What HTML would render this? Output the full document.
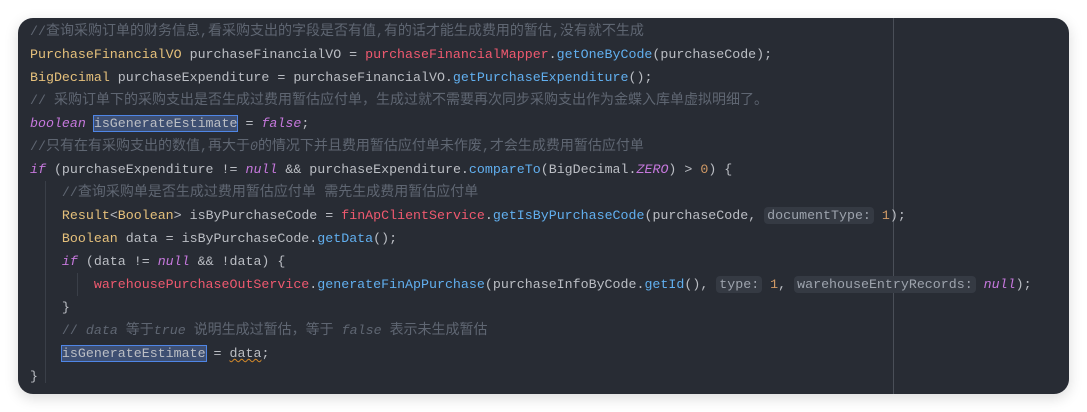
<!DOCTYPE html>
<html><head><meta charset="utf-8"><style>
html,body{margin:0;padding:0;background:#fff;width:1087px;height:412px;overflow:hidden}
.card{position:absolute;left:18px;top:18px;width:1051px;height:376px;background:#282c34;border-radius:15px;box-shadow:0 4px 14px rgba(0,0,0,.15);overflow:hidden}
pre{margin:0;position:absolute;left:12px;top:2px;font-family:"Liberation Mono","Noto Sans CJK SC",monospace;font-size:13.3px;line-height:23px;color:#bbbec4}
.c{color:#5f6672}.t{color:#e5c07b}.r{color:#ef596f}.f{color:#61afef}.k{color:#c678dd;font-style:italic}.n{color:#d19a66}
.z{font-size:14px;line-height:10px}
.sel{background:#3e4f72;outline:1px solid #4f86e6}
.h{background:#353a43;color:#9da3ad;border-radius:4px;padding:1px 3px}
.g{position:absolute;width:1px;background:#3a3f48}
.u{text-decoration:underline wavy #d48a2a;text-decoration-thickness:1px}
</style></head><body>
<div class="card">
<div class="g" style="left:875px;top:0;height:376px;background:#4a4f58"></div>
<div class="g" style="left:27px;top:163px;height:202px"></div>
<div class="g" style="left:59px;top:255px;height:23px"></div>
<pre><span class="c">//<span class="z">查询采购订单的财务信息</span>,<span class="z">看采购支出的字段是否有值</span>,<span class="z">有的话才能生成费用的暂估</span>,<span class="z">没有就不生成</span></span>
<span class="t">PurchaseFinancialVO</span> purchaseFinancialVO = <span class="r">purchaseFinancialMapper</span>.<span class="f">getOneByCode</span>(purchaseCode);
<span class="t">BigDecimal</span> purchaseExpenditure = purchaseFinancialVO.<span class="f">getPurchaseExpenditure</span>();
<span class="c">// <span class="z">采购订单下的采购支出是否生成过费用暂估应付单，生成过就不需要再次同步采购支出作为金蝶入库单虚拟明细了。</span></span>
<span class="k">boolean</span> <span class="sel">isGenerateEstimate</span> = <span class="k">false</span>;
<span class="c">//<span class="z">只有在有采购支出的数值</span>,<span class="z">再大于</span><i>0</i><span class="z">的情况下并且费用暂估应付单未作废</span>,<span class="z">才会生成费用暂估应付单</span></span>
<span class="k">if</span> (purchaseExpenditure != <span class="k">null</span> &amp;&amp; purchaseExpenditure.<span class="f">compareTo</span>(BigDecimal.<span class="k">ZERO</span>) &gt; <span class="n">0</span>) {
    <span class="c">//<span class="z">查询采购单是否生成过费用暂估应付单 需先生成费用暂估应付单</span></span>
    <span class="t">Result</span>&lt;<span class="t">Boolean</span>&gt; isByPurchaseCode = <span class="r">finApClientService</span>.<span class="f">getIsByPurchaseCode</span>(purchaseCode, <span class="h">documentType:</span> <span class="n">1</span>);
    <span class="t">Boolean</span> data = isByPurchaseCode.<span class="f">getData</span>();
    <span class="k">if</span> (data != <span class="k">null</span> &amp;&amp; !data) {
        <span class="r">warehousePurchaseOutService</span>.<span class="f">generateFinApPurchase</span>(purchaseInfoByCode.<span class="f">getId</span>(), <span class="h">type:</span> <span class="n">1</span>, <span class="h">warehouseEntryRecords:</span> <span class="k">null</span>);
    }
    <span class="c">// <i>data</i> <span class="z">等于</span><i>true</i> <span class="z">说明生成过暂估，等于</span> <i>false</i> <span class="z">表示未生成暂估</span></span>
    <span class="sel">isGenerateEstimate</span> = <span class="u">data</span>;
}</pre>
</div>
</body></html>
